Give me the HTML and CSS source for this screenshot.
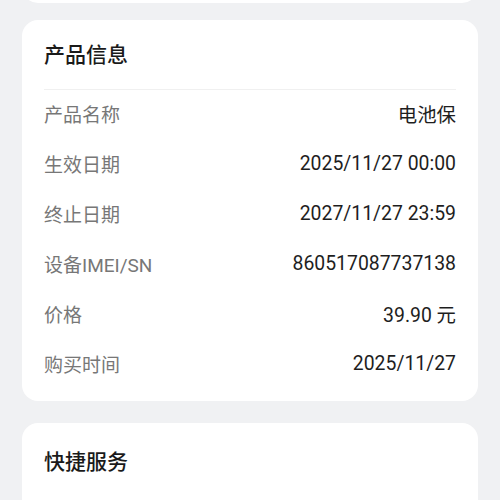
FILE: index.html
```html
<!DOCTYPE html>
<html lang="zh-CN">
<head>
  <meta charset="UTF-8" />
  <meta name="viewport" content="width=device-width, initial-scale=1.0"/>
  <title>产品信息</title>
  <link rel="stylesheet" href="styles.css">
</head>
<body>
  <div class="page">
    <div class="card card-top"></div>

    <div class="card card-info">
      <h2 class="card-title">产品信息</h2>
      <div class="info-list">
        <div class="info-row"><span class="label">产品名称</span><span class="value">电池保</span></div>
        <div class="info-row"><span class="label">生效日期</span><span class="value">2025/11/27 00:00</span></div>
        <div class="info-row"><span class="label">终止日期</span><span class="value">2027/11/27 23:59</span></div>
        <div class="info-row"><span class="label">设备IMEI/SN</span><span class="value">860517087737138</span></div>
        <div class="info-row"><span class="label">价格</span><span class="value">39.90 元</span></div>
        <div class="info-row"><span class="label">购买时间</span><span class="value">2025/11/27</span></div>
      </div>
    </div>

    <div class="card card-quick">
      <h2 class="card-title">快捷服务</h2>
    </div>
  </div>
</body>
</html>
```

FILE: styles.css
```css
html, body {
  margin: 0;
  padding: 0;
  background: #f0f1f3;
  font-family: Roboto, "Noto Sans CJK SC", sans-serif;
  color: #1a1a1a;
}
.page {
  display: flex;
  flex-direction: column;
  padding: 0 22px;
  margin-top: -40px;
  height: 540px;
  overflow: hidden;
}
.card {
  background: #ffffff;
  border-radius: 16px;
  padding: 0 22px;
  flex-shrink: 0;
}
.card-top {
  height: 43px;
}
.card-info {
  margin-top: 17px;
}
.card-quick {
  margin-top: 22px;
  height: 120px;
}
.card-title {
  margin: 0;
  padding-top: 2px;
  height: 67px;
  line-height: 67px;
  font-size: 21px;
  font-weight: 500;
  border-bottom: 1px solid #f0f0f0;
}
.card-quick .card-title {
  border-bottom: none;
  height: 74px;
  line-height: 74px;
}
.info-list {
  margin-top: -2px;
  padding: 0 0 13px;
}
.info-row {
  display: flex;
  justify-content: space-between;
  align-items: center;
  height: 50px;
  font-size: 19px;
}
.label {
  color: #777777;
}
.value {
  color: #1e1e1e;
  font-size: 19.4px;
}
```
